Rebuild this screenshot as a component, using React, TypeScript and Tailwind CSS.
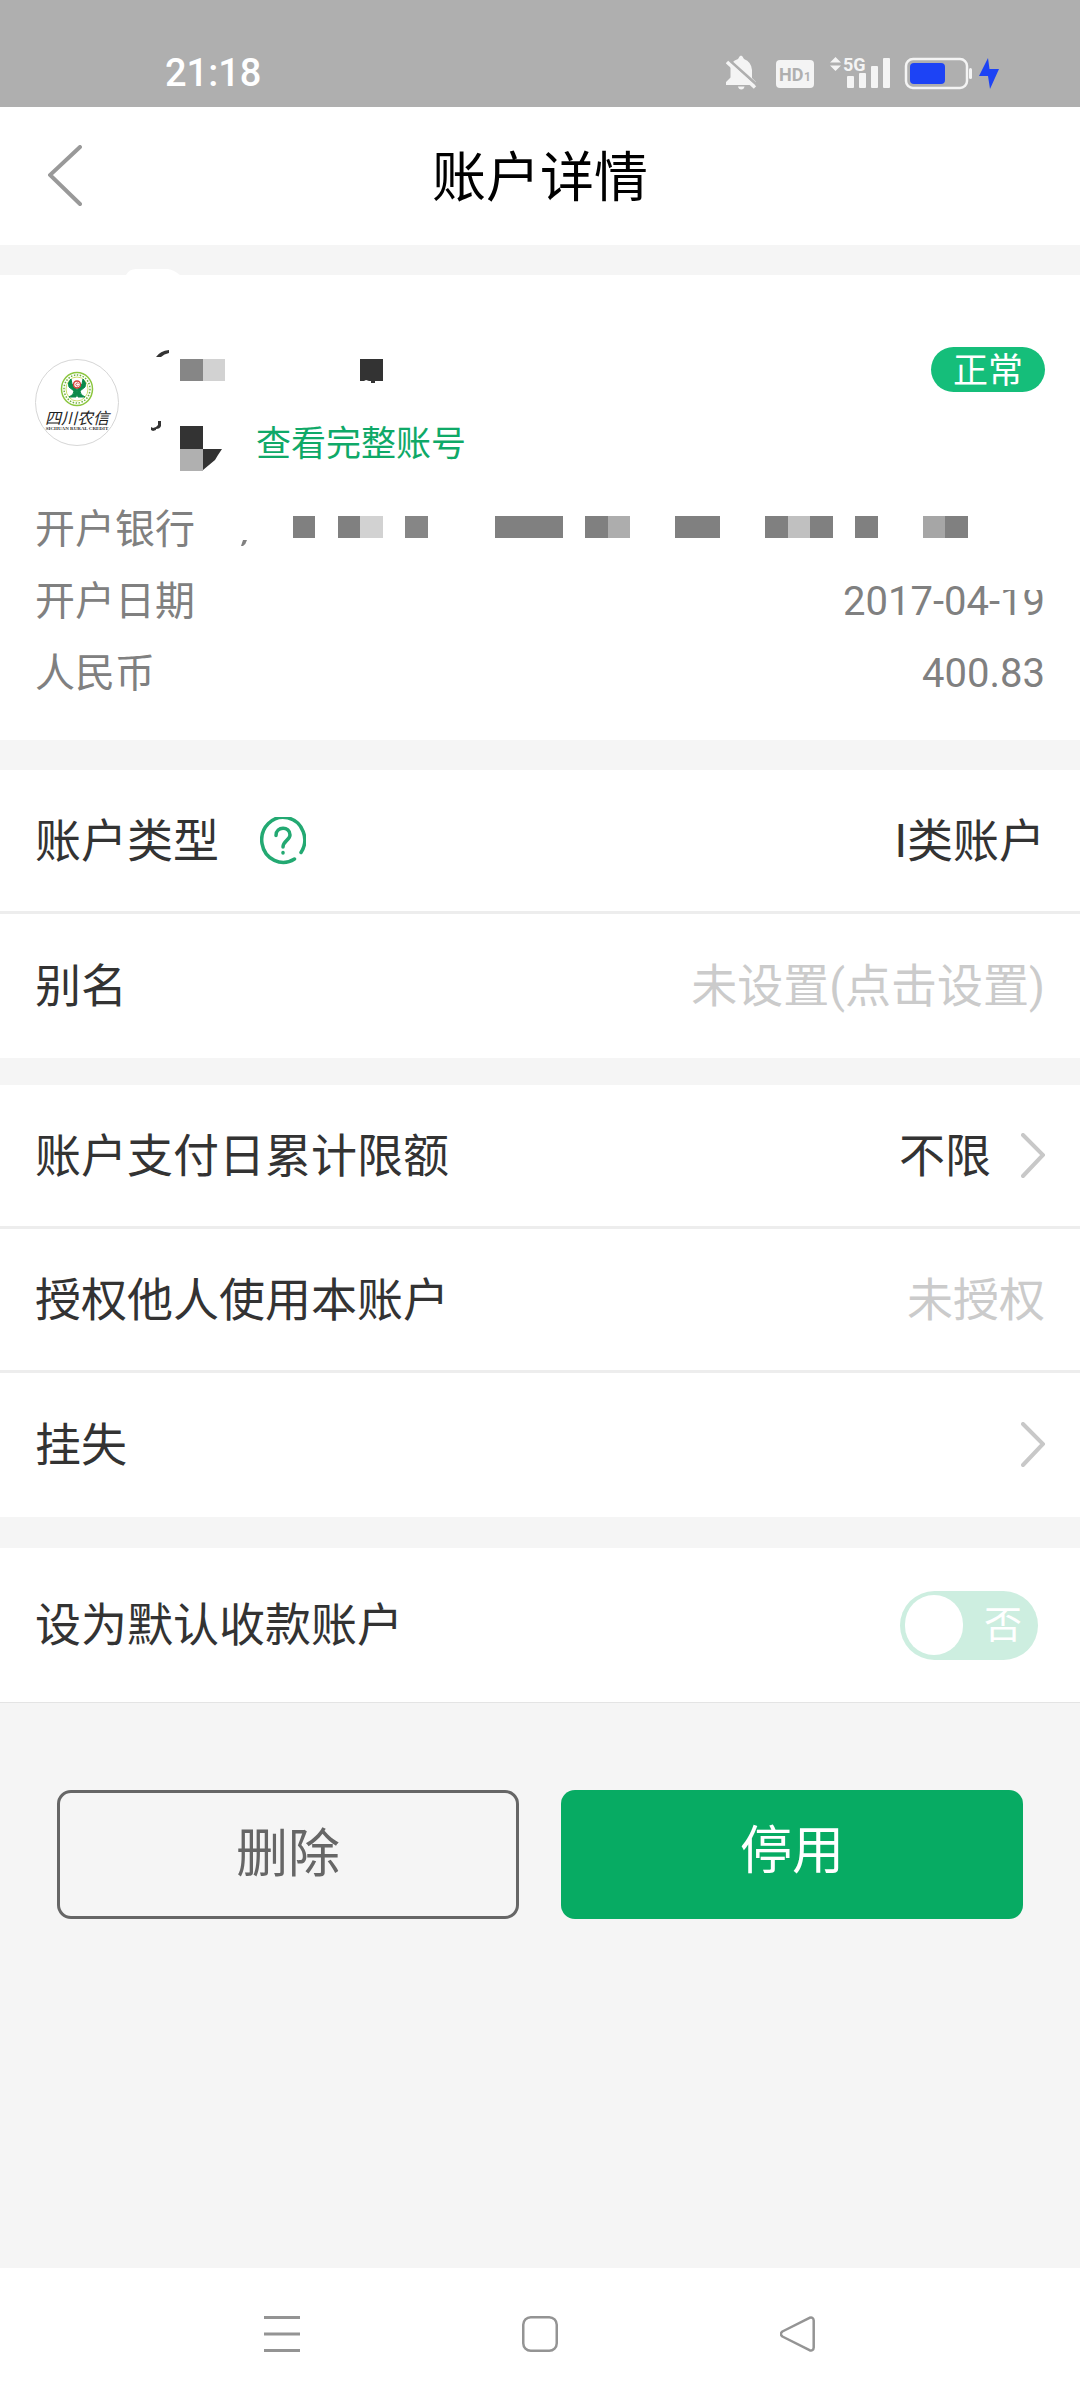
import React, { useState } from 'react';

type Block = { x: number; w: number; tone: string };

// masked part of the branch name
const bankBlocks: Block[] = [
  { x: 293, w: 22, tone: '#808080' },
  { x: 338, w: 22, tone: '#808080' },
  { x: 360, w: 23, tone: '#d2d2d2' },
  { x: 405, w: 23, tone: '#868686' },
  { x: 495, w: 68, tone: '#808080' },
  { x: 585, w: 23, tone: '#808080' },
  { x: 608, w: 22, tone: '#adadad' },
  { x: 675, w: 45, tone: '#808080' },
  { x: 765, w: 23, tone: '#808080' },
  { x: 788, w: 22, tone: '#c0c0c0' },
  { x: 810, w: 23, tone: '#808080' },
  { x: 855, w: 23, tone: '#808080' },
  { x: 923, w: 22, tone: '#a6a6a6' },
  { x: 945, w: 23, tone: '#808080' },
];

const StatusBar: React.FC = () => (
  <div className="flex h-[107px] items-end bg-[#afafaf] pr-[81px] pb-[15px] pl-[165px] text-white">
    <span className="text-[38px] leading-[38px] font-medium">21:18</span>
    <svg className="ml-auto h-[40px] w-[273px]" viewBox="726 51 273 40" fill="#f4f4f4" aria-hidden="true">
      {/* muted bell */}
      <path d="M738 58q1.500-3.500 3-3.500t3 3.500q7.500 3 8 11v8l4 4v3h-30v-3l4.500-4.500v-10q0-6 7.500-8.500zM738 85.500h6.500q-.5 3-3.200 3t-3.300-3z" />
      <path d="M729 59 757 84" stroke="#afafaf" strokeWidth="3" />
      <path d="M727 61 755 86.500" stroke="#f4f4f4" strokeWidth="3.500" />
      {/* HD */}
      <rect x="776" y="59" width="38" height="28" rx="4" />
      <text x="779" y="80" fontSize="18" fontWeight="700" fill="#afafaf" fontFamily="Roboto, sans-serif">HD</text>
      <text x="804" y="80" fontSize="12" fontWeight="700" fill="#afafaf" fontFamily="Roboto, sans-serif">1</text>
      {/* 5G signal */}
      <path d="M835.500 56 841 61.500h-11zM835.500 70 830 64.500h11z" />
      <text x="843" y="70" fontSize="18" fontWeight="700" fontFamily="Roboto, sans-serif">5G</text>
      <rect x="847" y="75" width="7" height="12" rx="1" />
      <rect x="859" y="72" width="7" height="15" rx="1" />
      <rect x="871" y="65" width="7" height="22" rx="1" />
      <rect x="883" y="57" width="7" height="30" rx="1" />
      {/* battery */}
      <rect x="906" y="58" width="61" height="29" rx="7" fill="none" stroke="#f4f4f4" strokeWidth="2.500" />
      <rect x="910" y="62" width="35" height="21" rx="4" fill="#1d43f5" />
      <rect x="969" y="67" width="3" height="11" rx="1.500" />
      <path d="M988 57 979 75h9l2 13 9-20h-9.500z" fill="#1d43f5" />
    </svg>
  </div>
);

const BankLogo: React.FC = () => (
  <svg className="mt-3 h-[87px] w-[84px] shrink-0" viewBox="0 0 84 87" role="img" aria-label="四川农信">
    <ellipse cx="42" cy="43.500" rx="41.500" ry="43" fill="#fff" stroke="#d6d6d6" />
    <ellipse cx="42" cy="30" rx="15.500" ry="16.500" fill="none" stroke="#8cc63f" strokeWidth="1.500" />
    <ellipse cx="42" cy="30" rx="13" ry="14" fill="none" stroke="#6fb23c" strokeWidth="1.500" strokeDasharray="1.500 1.500" />
    <ellipse cx="42" cy="30" rx="11" ry="12" fill="none" stroke="#c9dd6a" strokeWidth="1" />
    <path d="M36 20q-4 4-2 8l5 4q0 4-5 6h7q2-4 0-9l-4-4zM48 20q4 4 2 8l-5 4q0 4 5 6h-7q-2-4 0-9l4-4z" fill="#0a8a4b" stroke="#0a8a4b" />
    <circle cx="42" cy="25.500" r="3.500" fill="#fff" stroke="#d8423a" strokeWidth="1.500" />
    <path d="M43.500 24.500a1.500 1.500 0 1 0 0 2" fill="none" stroke="#d8423a" />
    <text x="42" y="65" textAnchor="middle" fontSize="16" fontStyle="italic" fill="#1e1e1e" fontFamily="Noto Sans CJK SC, sans-serif">四川农信</text>
    <text x="42" y="71" textAnchor="middle" fontSize="5" fontWeight="700" fill="#333" fontFamily="Liberation Serif, serif">SICHUAN RURAL CREDIT</text>
  </svg>
);

const Chevron: React.FC = () => (
  <svg className="h-[46px] w-[24px]" viewBox="0 0 24 46" fill="none" stroke="#c8c8c8" strokeWidth="4" strokeLinecap="round" aria-hidden="true">
    <path d="M2 2 22 22 2 43" />
  </svg>
);

const HelpIcon: React.FC = () => (
  <svg className="h-[48px] w-[46px]" viewBox="0 0 46 48" fill="none" stroke="#23a972" strokeWidth="3.500" strokeLinecap="round" aria-hidden="true">
    <path d="M34.500 42A21.500 22.500 0 1 1 41 35.500" />
    <path d="M16 18.500c0-9.500 14-9.500 14-.5 0 5-7 6-7 12" />
    <path d="M23 35.500v.5" />
  </svg>
);

type RowProps = {
  label: string;
  value?: string;
  muted?: boolean;
  arrow?: boolean;
  help?: boolean;
};

const Row: React.FC<RowProps> = ({ label, value, muted, arrow, help }) => (
  <div className="flex h-[144px] items-center border-b-[3px] border-[#ededed] px-[35px] text-[46px] leading-[60px] last:border-b-0">
    <span>{label}</span>
    {help && (
      <button className="ml-[41px]" aria-label="账户类型说明">
        <HelpIcon />
      </button>
    )}
    <button className="ml-auto flex items-center gap-[30px]" aria-label={value ? undefined : label}>
      {value && <span className={muted ? 'text-[#cbcbcb]' : ''}>{value}</span>}
      {arrow && <Chevron />}
    </button>
  </div>
);

const AccountCard: React.FC = () => (
  <section className="relative mt-[30px] bg-white px-[35px] pt-[72px] pb-[30px] text-[#808080]">
    <svg className="absolute -top-[6px] left-[124px] h-[6px] w-[60px]" viewBox="0 0 60 6" fill="#fff" aria-hidden="true">
      <path d="M2 6Q5 0 12 0H44Q50 1 56 6z" />
    </svg>
    <div className="flex h-[147px] items-start">
      <BankLogo />
      <div className="ml-[30px] flex flex-col gap-[21px]">
        <svg className="h-[45px] w-[240px]" viewBox="149 347 240 45" aria-hidden="true">
          <path d="M156 357q4-6 13-7v3q-5 1-8 4z" fill="#333" />
          <rect x="180" y="359" width="23" height="22" fill="#868686" />
          <rect x="203" y="359" width="22" height="22" fill="#d2d2d2" />
          <path d="M360 359h23v22h-8v2h-4v-2h-2l-3-1-2 1h-4z" fill="#333" />
        </svg>
        <div className="flex items-center gap-8">
          <svg className="h-[60px] w-[75px]" viewBox="149 413 75 60" aria-hidden="true">
            <path d="M158 421h3v5q-1 3-5 3v-2l2-2zM151 427l2 1 3-1v3l-3 1-2-1z" fill="#333" />
            <rect x="180" y="426" width="23" height="23" fill="#333" />
            <rect x="180" y="449" width="23" height="22" fill="#b0b0b0" />
            <path d="M203 449h19l-4 6-3 5-12 10z" fill="#333" />
          </svg>
          <a href="#" className="pt-[3px] text-[35px] leading-[57px] text-[#0fa968]">查看完整账号</a>
        </div>
      </div>
      <span className="ml-auto flex h-[45px] w-[114px] items-center justify-center rounded-full bg-[#15be7a] pt-[5px] text-[35px] leading-[40px] text-white">
        正常
      </span>
    </div>
    <dl className="text-[40px] leading-[72px]">
      <div className="flex items-center">
        <dt>开户银行</dt>
        <dd className="ml-[41px]">
          <svg className="h-[44px] w-[734px]" viewBox="236 508 734 44" aria-label="已隐藏">
            <path d="M243 540h4q-1 4-4 6h-2z" fill="#808080" />
            {bankBlocks.map((b) => (
              <rect key={b.x} x={b.x} y="516" width={b.w} height="22" fill={b.tone} />
            ))}
          </svg>
        </dd>
      </div>
      <div className="flex justify-between">
        <dt>开户日期</dt>
        <dd className="relative">
          2017-04-19
          <span className="absolute top-[18px] right-0 h-[6px] w-[42px] bg-white" />
        </dd>
      </div>
      <div className="flex justify-between">
        <dt>人民币</dt>
        <dd>400.83</dd>
      </div>
    </dl>
  </section>
);

const NavBar: React.FC = () => (
  <nav className="grid h-[132px] grid-cols-3 place-items-center bg-white px-[153px]">
    <button aria-label="最近任务">
      <svg className="size-9" viewBox="0 0 36 36" stroke="#949494" strokeWidth="3" aria-hidden="true">
        <path d="M0 1.500h36M0 18h36M0 34.500h36" />
      </svg>
    </button>
    <button aria-label="主页">
      <svg className="size-9" viewBox="0 0 36 36" fill="none" stroke="#949494" strokeWidth="2.500" aria-hidden="true">
        <rect x="1.250" y="1.250" width="33.500" height="33.500" rx="7.500" />
      </svg>
    </button>
    <button aria-label="返回">
      <svg className="size-9" viewBox="0 0 36 36" fill="none" stroke="#949494" strokeWidth="2.500" strokeLinejoin="round" aria-hidden="true">
        <path d="M29.500 1.800 2.400 15.500q-3 2.500 0 5L29.500 34.200q4 1 4.200-2.700V4.500q-.2-3.700-4.200-2.700z" />
      </svg>
    </button>
  </nav>
);

const App: React.FC = () => {
  const [isDefault, setIsDefault] = useState(false);

  return (
    <div className="flex min-h-screen flex-col bg-[#f5f5f5] font-[Roboto,'Noto_Sans_CJK_SC',sans-serif] text-[#333]">
      <StatusBar />
      <header className="grid h-[138px] grid-cols-[1fr_auto_1fr] items-center bg-white pl-12">
        <button className="justify-self-start" aria-label="返回">
          <svg className="h-[62px] w-[34px]" viewBox="0 0 34 62" fill="none" stroke="#999" strokeWidth="4" strokeLinecap="round" aria-hidden="true">
            <path d="M32 2 2 30 32 59" />
          </svg>
        </button>
        <h1 className="pt-[6px] pr-12 text-[54px] leading-[72px] text-black">账户详情</h1>
      </header>

      <main className="flex-1">
        <AccountCard />

        <section className="mt-[30px] bg-white">
          <Row label="账户类型" value="I类账户" help />
          <Row label="别名" value="未设置(点击设置)" muted />
        </section>

        <section className="mt-[27px] bg-white">
          <Row label="账户支付日累计限额" value="不限" arrow />
          <Row label="授权他人使用本账户" value="未授权" muted />
          <Row label="挂失" arrow />
        </section>

        <section className="mt-[31px] border-b border-[#e4e4e4] bg-white pr-[42px] pl-[35px]">
          <label className="flex h-[154px] items-center justify-between text-[46px] leading-[60px]">
            设为默认收款账户
            <input
              type="checkbox"
              className="peer sr-only"
              checked={isDefault}
              onChange={(e) => setIsDefault(e.target.checked)}
            />
            <span className="flex h-[69px] w-[138px] items-center justify-between rounded-full bg-[#cdeee0] pr-4 pl-[5px] text-[38px] text-white peer-checked:flex-row-reverse peer-checked:bg-[#07ab63]">
              <span className="h-[60px] w-[58px] rounded-full bg-white" />
              {isDefault ? '是' : '否'}
            </span>
          </label>
        </section>

        <div className="grid grid-cols-2 gap-[42px] px-[57px] pt-[87px] text-[52px]">
          <button className="h-[129px] rounded-[14px] border-[3px] border-[#666] text-[#666]">删除</button>
          <button className="h-[129px] rounded-[14px] bg-[#07ab63] pb-[6px] text-white">停用</button>
        </div>
      </main>

      <NavBar />
    </div>
  );
};

export default App;
